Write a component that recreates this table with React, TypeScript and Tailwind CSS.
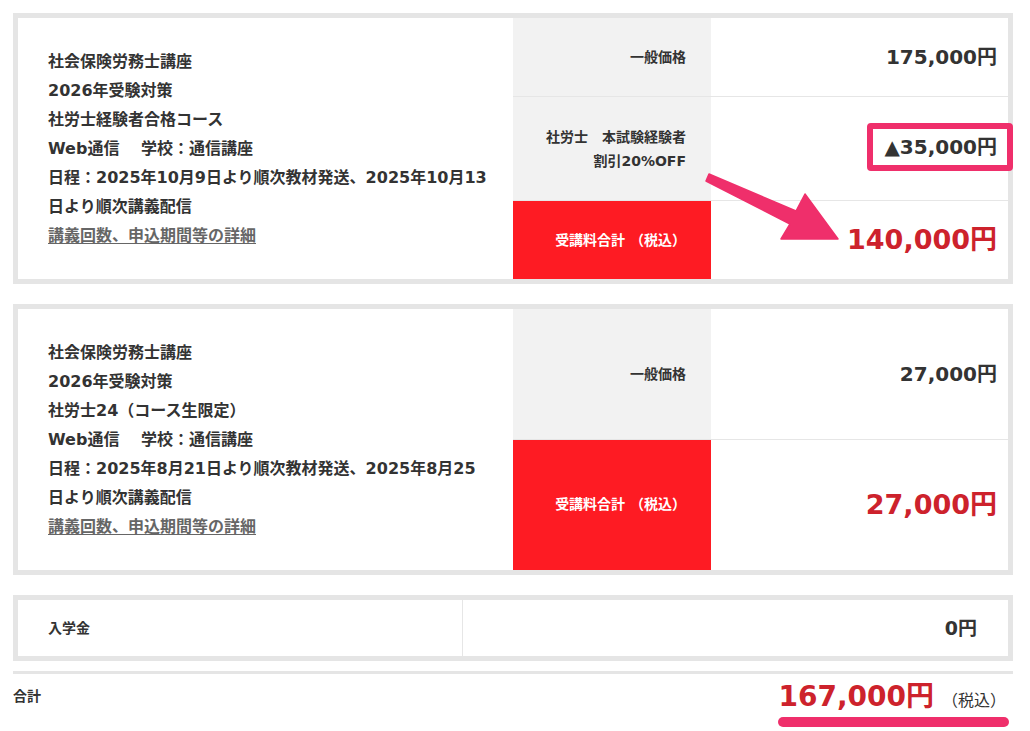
import React from "react";

const font = {
  fontFamily: '"DejaVu Sans", "Noto Sans CJK JP", sans-serif',
};

type Course = {
  lines: string[];
  rows: { label: React.ReactNode; value: React.ReactNode; total?: boolean }[];
  rowClass: string;
};

const courses: Course[] = [
  {
    lines: [
      "社会保険労務士講座",
      "2026年受験対策",
      "社労士経験者合格コース",
      "Web通信　 学校：通信講座",
      "日程：2025年10月9日より順次教材発送、2025年10月13日より順次講義配信",
    ],
    rowClass: "grid-rows-[79px_104px_1fr]",
    rows: [
      { label: "一般価格", value: "175,000円" },
      {
        label: (
          <>
            社労士　本試験経験者
            <br />
            割引20%OFF
          </>
        ),
        value: (
          <span className="relative inline-block leading-[24px] -mt-[4px]">
            ▲35,000円
            <span className="absolute -left-[17px] -right-[16px] -top-[12px] -bottom-[12px] rounded-[4px] border-[6px] border-[#ef2f6b]" />
          </span>
        ),
      },
      { label: "受講料合計 （税込）", value: "140,000円", total: true },
    ],
  },
  {
    lines: [
      "社会保険労務士講座",
      "2026年受験対策",
      "社労士24（コース生限定）",
      "Web通信　 学校：通信講座",
      "日程：2025年8月21日より順次教材発送、2025年8月25日より順次講義配信",
    ],
    rowClass: "grid-rows-2",
    rows: [
      { label: "一般価格", value: "27,000円" },
      { label: "受講料合計 （税込）", value: "27,000円", total: true },
    ],
  },
];

function CourseCard({ course }: { course: Course }) {
  return (
    <div className="border-[5px] border-[#e5e5e5] bg-white grid grid-cols-[495px_1fr] min-h-[271px]">
      {/* Course info */}
      <div className="flex flex-col justify-center pl-[30px] pr-[24px] py-[28px] text-[16px] leading-[29px] font-bold text-[#333]">
        {course.lines.map((l, i) => (
          <p key={i}>{l}</p>
        ))}
        <a className="text-[#666] underline underline-offset-2 cursor-pointer">
          講義回数、申込期間等の詳細
        </a>
      </div>

      {/* Price rows */}
      <div className={`grid ${course.rowClass}`}>
        {course.rows.map((r, i) => (
          <div
            key={i}
            className={`grid grid-cols-[198px_1fr] ${
              i < course.rows.length - 1 ? "border-b border-[#e6e6e6]" : ""
            }`}
          >
            {r.total ? (
              <div className="bg-[#fe1b23] text-white text-[14px] font-bold flex items-center justify-end pr-[25px]">
                {r.label}
              </div>
            ) : (
              <div className="bg-[#f2f2f2] text-[#333] text-[14px] leading-[24px] font-bold flex items-center justify-end text-right pr-[25px]">
                <div>{r.label}</div>
              </div>
            )}
            <div
              className={`flex items-center justify-end pr-[11px] font-bold ${
                r.total ? "text-[27px] text-[#cd222c]" : "text-[20px] text-[#333]"
              }`}
            >
              {r.value}
            </div>
          </div>
        ))}
      </div>
    </div>
  );
}

export default function App() {
  return (
    <div className="relative min-h-screen bg-white" style={font}>
      <div className="w-[1000px] ml-[13px] pt-[13px] flex flex-col">
        <CourseCard course={courses[0]} />
        <div className="mt-[20px]">
          <CourseCard course={courses[1]} />
        </div>

        {/* Entrance fee */}
        <div className="mt-[20px] border-[5px] border-[#e5e5e5] grid grid-cols-[445px_1fr] h-[66px]">
          <div className="border-r border-[#e6e6e6] flex items-center pl-[30px] text-[14px] font-bold text-[#333]">
            入学金
          </div>
          <div className="flex items-center justify-end pr-[31px] text-[19px] font-bold text-[#333]">
            0円
          </div>
        </div>

        <div className="mt-[10px] h-[3px] bg-[#e5e5e5]" />

        {/* Total */}
        <div className="flex justify-between items-start">
          <p className="mt-[12px] text-[14px] font-bold text-[#333]">合計</p>
          <div className="inline-flex flex-col items-stretch mr-[4px]">
            <p className="flex items-baseline justify-end gap-[8px] leading-[32px] mt-[7px] pr-[3px]">
              <span className="text-[28px] font-bold text-[#cd222c]">167,000円</span>
              <span className="text-[16px] text-[#333]">（税込）</span>
            </p>
            <div className="h-[10px] rounded-full bg-[#ef2f6b]" />
          </div>
        </div>
      </div>

      {/* Annotation arrow */}
      <svg
        className="absolute left-0 top-0 pointer-events-none"
        width="1030"
        height="731"
        viewBox="0 0 1030 731"
      >
        <polygon
          points="709,174 796,211 805,194 838,239 781,239 790,224 706,181"
          fill="#ef2f6b"
          stroke="#ef2f6b"
          strokeWidth="1.5"
          strokeLinejoin="round"
        />
      </svg>
    </div>
  );
}
